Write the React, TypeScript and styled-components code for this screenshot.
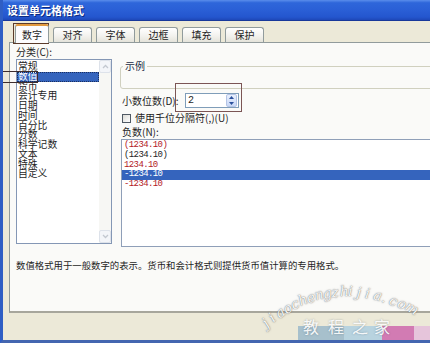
import React from "react";
import styled, { createGlobalStyle } from "styled-components";

const GlobalStyle = createGlobalStyle`
  html, body { margin: 0; padding: 0; background: #ffffff; overflow: hidden; }
  #root { width: 430px; height: 343px; }
`;

const CJK = `"Noto Sans CJK SC", "Noto Sans", sans-serif`;
const NUM = `"Liberation Mono", "DejaVu Sans Mono", monospace`;

const Frame = styled.div`
  position: relative;
  width: 430px;
  height: 343px;
  box-sizing: border-box;
  border-left: 3px solid #2f5ec4;
  border-bottom: 3px solid #4466b0;
  display: flex;
  flex-direction: column;
  overflow: hidden;
  font-family: ${CJK};
  color: #1e1e1e;
`;

const TitleBar = styled.div`
  flex: none;
  height: 20px;
  border-bottom: 1px solid #17389a;
  background: linear-gradient(
    180deg,
    #5a8deb 0%,
    #2e66da 14%,
    #2a5fd6 50%,
    #2456ce 85%,
    #1e48b8 100%
  );
  display: flex;
  align-items: center;
  padding-left: 4px;
`;

const Title = styled.span`
  color: #ffffff;
  font-size: 11px;
  font-weight: 700;
  line-height: 12px;
  text-shadow: 1px 1px 0 #0c2a80;
`;

const Body = styled.div`
  flex: 1;
  min-height: 0;
  overflow: hidden;
  background: #ece9d8;
  padding: 3px 0 0 6px;
  display: flex;
  flex-direction: column;
  align-items: flex-start;
`;

const TabRow = styled.div`
  flex: none;
  display: flex;
  align-items: flex-end;
  height: 18px;
  padding-left: 6px;
  position: relative;
  z-index: 1;
`;

const Tab = styled.div<{ $active?: boolean }>`
  box-sizing: border-box;
  width: ${(p) => (p.$active ? 34 : 39)}px;
  height: ${(p) => (p.$active ? 19 : 15)}px;
  margin-right: 4px;
  margin-bottom: ${(p) => (p.$active ? -1 : 0)}px;
  border: 1px solid #919b9c;
  border-bottom: none;
  border-top: ${(p) => (p.$active ? "2px solid #e39a3e" : "1px solid #919b9c")};
  border-radius: 3px 3px 0 0;
  background: ${(p) =>
    p.$active
      ? "#fcfcfe"
      : "linear-gradient(180deg, #ffffff 0%, #f3f2ee 55%, #e4e3da 100%)"};
  font-size: 10px;
  line-height: 10px;
  display: flex;
  align-items: center;
  justify-content: center;
  white-space: nowrap;
`;

const Panel = styled.div`
  flex: none;
  box-sizing: border-box;
  width: 500px;
  height: 271px;
  border-top: 1px solid #919b9c;
  border-left: 1px solid #919b9c;
  border-bottom: 2px solid #a7a69c;
  background: #fafaf8;
  padding: 4px 0 0 6px;
  display: grid;
  grid-template-columns: 96px 380px;
  column-gap: 8px;
  align-content: start;
`;

const Column = styled.div`
  display: flex;
  flex-direction: column;
  align-items: stretch;
  min-width: 0;
`;

const FieldLabel = styled.div<{ $gap?: number; $indent?: number }>`
  font-size: 10px;
  line-height: 10px;
  height: 10px;
  white-space: nowrap;
  margin-top: ${(p) => p.$gap ?? 0}px;
  padding-left: ${(p) => p.$indent ?? 0}px;
`;

const CategoryList = styled.div`
  box-sizing: border-box;
  margin-top: 2px;
  width: 96px;
  height: 185px;
  border: 1px solid #8497b5;
  background: #ffffff;
  display: flex;
`;

const Items = styled.div<{ $pad: number }>`
  flex: 1;
  min-width: 0;
  padding-top: ${(p) => p.$pad}px;
`;

const CatItem = styled.div<{ $selected?: boolean }>`
  box-sizing: border-box;
  height: 9.75px;
  line-height: 9.75px;
  font-size: 9.8px;
  padding-left: 1px;
  white-space: nowrap;
  color: ${(p) => (p.$selected ? "#ffffff" : "#1e1e1e")};
  background: ${(p) => (p.$selected ? "#3564bd" : "transparent")};
  outline: ${(p) => (p.$selected ? "1px dotted #1a2f60" : "none")};
  outline-offset: -1px;
`;

const ScrollTrack = styled.div`
  width: 12px;
  display: flex;
  flex-direction: column;
  justify-content: space-between;
  background: #f7f7f4;
`;

const ScrollBtn = styled.div`
  box-sizing: border-box;
  height: 13px;
  border: 1px solid #dde2ea;
  border-radius: 2px;
  background: #f3f5f9;
  display: flex;
  align-items: center;
  justify-content: center;
`;

const GroupBox = styled.fieldset`
  box-sizing: border-box;
  margin: 14px 0 0 0;
  padding: 0;
  height: 28px;
  border: 1px solid #d0d0bf;
  border-radius: 3px;
  min-width: 0;
`;

const Legend = styled.legend`
  font-size: 10px;
  line-height: 10px;
  padding: 0 2px;
  margin-left: 2px;
  color: #222a44;
`;

const FieldRow = styled.div<{ $gap: number; $h: number }>`
  display: flex;
  align-items: center;
  margin-top: ${(p) => p.$gap}px;
  height: ${(p) => p.$h}px;
  padding-left: 2px;
`;

const RowLabel = styled.span`
  width: 63px;
  font-size: 10px;
  line-height: 10px;
  white-space: nowrap;
`;

const Spinner = styled.div`
  box-sizing: border-box;
  width: 54px;
  height: 15px;
  border: 1px solid #7f9db9;
  background: #ffffff;
  display: flex;
  align-items: center;
`;

const SpinValue = styled.span`
  flex: 1;
  padding-left: 2px;
  font-family: ${NUM};
  font-size: 10px;
  line-height: 10px;
`;

const SpinButtons = styled.div`
  box-sizing: border-box;
  width: 11px;
  height: 13px;
  margin-right: 1px;
  display: flex;
  flex-direction: column;
  border: 1px solid #b4c4e6;
  border-radius: 2px;
  background: linear-gradient(180deg, #e8effd 0%, #c9d8f6 100%);
`;

const SpinHalf = styled.div`
  flex: 1;
  display: flex;
  align-items: center;
  justify-content: center;
`;

const CheckBox = styled.span`
  box-sizing: border-box;
  width: 9px;
  height: 9px;
  margin-right: 4px;
  border: 1px solid #505a64;
  background: linear-gradient(135deg, #dcdcd6 0%, #ffffff 100%);
`;

const CheckText = styled.span`
  font-size: 10px;
  line-height: 10px;
  white-space: nowrap;
`;

const NegList = styled.div`
  box-sizing: border-box;
  margin-top: 2px;
  margin-left: 1px;
  height: 108px;
  border: 1px solid #8f9fb8;
  background: #ffffff;
  padding-top: 1px;
`;

const NegItem = styled.div<{ $red?: boolean; $selected?: boolean }>`
  height: 9.8px;
  line-height: 9.8px;
  padding-left: 2px;
  font-family: ${NUM};
  font-size: 9px;
  letter-spacing: -0.6px;
  white-space: nowrap;
  color: ${(p) => (p.$selected ? "#ffffff" : p.$red ? "#b3201f" : "#1e1e1e")};
  background: ${(p) => (p.$selected ? "#3564bd" : "transparent")};
`;

const Description = styled.div`
  grid-column: 1 / -1;
  margin-top: 13px;
  font-size: 9.4px;
  line-height: 10px;
  white-space: nowrap;
`;

const Overlay = styled.div`
  position: absolute;
  top: 0;
  left: -3px;
  width: 430px;
  height: 343px;
  pointer-events: none;
`;

const MarkBox = styled.div<{ $color: string; $w: number }>`
  position: absolute;
  box-sizing: border-box;
  border: ${(p) => p.$w}px solid ${(p) => p.$color};
`;

const Block = styled.div<{ $bg: string }>`
  position: absolute;
  top: 326px;
  height: 17px;
  background: ${(p) => p.$bg};
`;

const WaterChar = styled.span`
  position: absolute;
  font-family: "DejaVu Serif", "Liberation Serif", serif;
  font-style: italic;
  font-size: 14px;
  line-height: 14px;
  color: rgba(255, 255, 255, 0.95);
  text-shadow: 0 0 1px rgba(90, 90, 90, 0.9), 0 0 2px rgba(120, 120, 120, 0.5);
  transform-origin: 50% 100%;
`;

const BrandChar = styled.span`
  position: absolute;
  top: 318px;
  font-family: ${CJK};
  font-size: 16px;
  line-height: 17px;
  color: rgba(255, 255, 255, 0.93);
  text-shadow: 0 0 2px rgba(60, 80, 100, 0.45);
`;

const Chevron = ({ up, color }: { up?: boolean; color: string }) => (
  <svg width="7" height="5" viewBox="0 0 7 5">
    <path
      d={up ? "M1 4 L3.5 1.5 L6 4" : "M1 1 L3.5 3.5 L6 1"}
      fill="none"
      stroke={color}
      strokeWidth="1.3"
    />
  </svg>
);

const categories = [
  "常规",
  "数值",
  "货币",
  "会计专用",
  "日期",
  "时间",
  "百分比",
  "分数",
  "科学记数",
  "文本",
  "特殊",
  "自定义",
];

const negatives = [
  { text: "(1234.10)", red: true },
  { text: "(1234.10)", red: false },
  { text: "1234.10", red: true },
  { text: "-1234.10", red: false, selected: true },
  { text: "-1234.10", red: true },
];

const tabs = ["数字", "对齐", "字体", "边框", "填充", "保护"];

const waterText = "jiaochengzhijia.com";
const brand = [
  { ch: "教", x: 303 },
  { ch: "程", x: 328 },
  { ch: "之", x: 352 },
  { ch: "家", x: 374 },
];

export default function App() {
  const n = waterText.length;
  const a0 = -43;
  const a1 = 31;
  return (
    <>
      <GlobalStyle />
      <Frame>
        <TitleBar>
          <Title>设置单元格格式</Title>
        </TitleBar>
        <Body>
          <TabRow>
            {tabs.map((t, i) => (
              <Tab key={t} $active={i === 0}>
                {t}
              </Tab>
            ))}
          </TabRow>
          <Panel>
            <Column>
              <FieldLabel>分类(C):</FieldLabel>
              <CategoryList>
                <Items $pad={2}>
                  {categories.map((c, i) => (
                    <CatItem key={c} $selected={i === 1}>
                      {c}
                    </CatItem>
                  ))}
                </Items>
                <ScrollTrack>
                  <ScrollBtn>
                    <Chevron up color="#c3c8d0" />
                  </ScrollBtn>
                  <ScrollBtn>
                    <Chevron color="#c3c8d0" />
                  </ScrollBtn>
                </ScrollTrack>
              </CategoryList>
            </Column>
            <Column>
              <GroupBox>
                <Legend>示例</Legend>
              </GroupBox>
              <FieldRow $gap={4} $h={15}>
                <RowLabel>小数位数(D):</RowLabel>
                <Spinner>
                  <SpinValue>2</SpinValue>
                  <SpinButtons>
                    <SpinHalf>
                      <svg width="5" height="3" viewBox="0 0 5 3">
                        <path d="M0 3 L2.5 0 L5 3 Z" fill="#2a4f9c" />
                      </svg>
                    </SpinHalf>
                    <SpinHalf>
                      <svg width="5" height="3" viewBox="0 0 5 3">
                        <path d="M0 0 L2.5 3 L5 0 Z" fill="#2a4f9c" />
                      </svg>
                    </SpinHalf>
                  </SpinButtons>
                </Spinner>
              </FieldRow>
              <FieldRow $gap={5} $h={10}>
                <CheckBox />
                <CheckText>使用千位分隔符(,)(U)</CheckText>
              </FieldRow>
              <FieldLabel $gap={4} $indent={2}>
                负数(N):
              </FieldLabel>
              <NegList>
                {negatives.map((v, i) => (
                  <NegItem key={i} $red={v.red} $selected={v.selected}>
                    {v.text}
                  </NegItem>
                ))}
              </NegList>
            </Column>
            <Description>
              数值格式用于一般数字的表示。货币和会计格式则提供货币值计算的专用格式。
            </Description>
          </Panel>
        </Body>
        <Overlay>
          <MarkBox
            $color="#5b3b2b"
            $w={1}
            style={{ left: 13, top: 23, width: 36, height: 21 }}
          />
          <MarkBox
            $color="#3e2e2e"
            $w={1}
            style={{ left: 2, top: 71, width: 36, height: 12 }}
          />
          <MarkBox
            $color="#7b5555"
            $w={1.5}
            style={{ left: 175, top: 83, width: 67, height: 29 }}
          />
          <Block $bg="#a7c0cc" style={{ left: 298, width: 46 }} />
          <Block $bg="#b8d3df" style={{ left: 344, width: 38 }} />
          <Block $bg="#d27bb3" style={{ left: 382, width: 32 }} />
          <Block $bg="#e6c5db" style={{ left: 414, width: 16 }} />
          {brand.map((b) => (
            <BrandChar key={b.ch} style={{ left: b.x }}>
              {b.ch}
            </BrandChar>
          ))}
          {waterText.split("").map((ch, i) => {
            const deg = a0 + ((a1 - a0) * i) / (n - 1);
            const rad = (deg * Math.PI) / 180;
            const x = 348 + 112 * Math.sin(rad);
            const y = 410 - 112 * Math.cos(rad);
            return (
              <WaterChar
                key={i}
                style={{
                  left: x - 4,
                  top: y - 14,
                  transform: `rotate(${deg}deg)`,
                }}
              >
                {ch}
              </WaterChar>
            );
          })}
        </Overlay>
      </Frame>
    </>
  );
}
